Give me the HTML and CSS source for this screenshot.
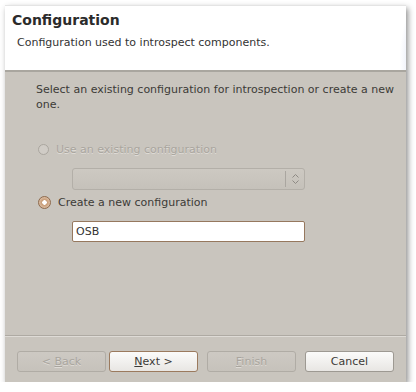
FILE: index.html
```html
<!DOCTYPE html>
<html lang="en">

<head>
  <meta charset="UTF-8">
  <title>Configuration</title>
  <link rel="stylesheet" href="styles.css">
</head>

<body>

  <div class="dialog">
    <div class="dialog-header">
      <h3>Configuration</h3>
      <p>Configuration used to introspect components.</p>
    </div>

    <div class="dialog-body">
      <p class="intro">Select an existing configuration for introspection or create a new one.</p>

      <label class="radio disabled">
        <span class="radio-dot"></span>
        <span>Use an existing configuration</span>
      </label>
      <div class="combo">
        <span class="combo-sep"></span>
        <svg class="combo-arrows" width="9" height="12" viewBox="0 0 9 12">
          <path d="M1.5 4.5 L4.5 1.5 L7.5 4.5 M1.5 7.5 L4.5 10.5 L7.5 7.5" fill="none" stroke="#8e8a84" stroke-width="1" />
        </svg>
      </div>

      <label class="radio checked">
        <span class="radio-dot"></span>
        <span>Create a new configuration</span>
      </label>
      <div class="text-field">OSB</div>
    </div>

    <div class="dialog-buttons">
      <button class="btn" disabled>&lt; <u>B</u>ack</button>
      <button class="btn default"><u>N</u>ext &gt;</button>
      <button class="btn gap" disabled><u>F</u>inish</button>
      <button class="btn gap">Cancel</button>
    </div>
  </div>

</body>

</html>
```

FILE: styles.css
```css
body {
  margin: 0;
  padding: 0;
  background-color: #fff;
  font-family: "DejaVu Sans", sans-serif;
  font-size: 12px;
  color: #3c3b37;
}

.dialog {
  width: 401px;
  height: 377px;
  margin: 5px 0 0 5px;
  display: flex;
  flex-direction: column;
  background-color: #c9c5be;
  box-shadow: 2px 3px 6px rgba(0, 0, 0, 0.45);
}

.dialog-header {
  height: 67px;
  padding: 6px 0 0 7px;
  background: radial-gradient(circle at 135% 85%, #dfe4f4 0, #e8ecf8 25%, #fff 27%);
  border-top: 1px solid #e4e4e4;
  border-bottom: 2px solid #a9a69f;
  box-sizing: border-box;
}

.dialog-header h3 {
  margin: 0;
  font-size: 14px;
  font-weight: bold;
  color: #2b2b2b;
}

.dialog-header p {
  margin: 8px 0 0 5px;
  font-size: 11px;
  color: #333;
}

.dialog-body {
  flex: 1;
  padding: 10px 0 0 31px;
  border-bottom: 1px solid #aeaaa3;
}

.intro {
  margin: 0 0 29px 0;
  font-size: 11px;
  line-height: 15px;
  width: 360px;
}

.radio {
  display: flex;
  align-items: center;
  gap: 7px;
  height: 16px;
  margin-left: 2px;
  font-size: 11px;
}

.radio-dot {
  width: 11px;
  height: 11px;
  border-radius: 50%;
  border: 1px solid #aaa69f;
  box-sizing: border-box;
  background: #d0ccc6;
}

.radio.disabled {
  color: #a9a59e;
  text-shadow: 0 1px #e0ddd8;
}

.radio.checked .radio-dot {
  width: 13px;
  height: 13px;
  border: 1px solid #8e6a4c;
  background: radial-gradient(circle, #fff 0, #fff 2px, #c79a74 2.5px, #d8b89c 5px);
}

.combo {
  width: 233px;
  height: 22px;
  margin: 11px 0 4px 36px;
  border: 1px solid #b3afa8;
  border-radius: 3px;
  box-sizing: border-box;
  background: linear-gradient(#cdc9c2, #c5c1ba);
  display: flex;
  align-items: center;
  justify-content: flex-end;
  gap: 5px;
  padding-right: 4px;
}

.combo-sep {
  width: 1px;
  height: 16px;
  background: #aaa6a0;
}

.text-field {
  width: 233px;
  height: 21px;
  margin: 11px 0 0 36px;
  padding: 3px 0 0 3px;
  border: 1px solid #96785e;
  border-radius: 2px;
  box-sizing: border-box;
  background: #fff;
  font-size: 11px;
  color: #333;
}

.dialog-buttons {
  height: 46px;
  display: flex;
  align-items: flex-start;
  padding: 14px 0 0 12px;
  box-sizing: border-box;
  border-top: 1px solid #dedbd6;
  gap: 3px;
}

.btn {
  width: 89px;
  height: 21px;
  font-family: "DejaVu Sans", sans-serif;
  font-size: 11px;
  color: #3c3b37;
  background: linear-gradient(#fbfbfa, #e8e6e3);
  border: 1px solid #9d9992;
  border-radius: 3px;
  padding: 0;
}

.btn.gap {
  margin-left: 6px;
}

.btn.default {
  border-color: #9b7a5e;
}

.btn:disabled {
  color: #a9a59e;
  background: linear-gradient(#cdc9c3, #c6c2bb);
  border-color: #b0aca5;
  text-shadow: 0 1px #dedbd6;
}
```
